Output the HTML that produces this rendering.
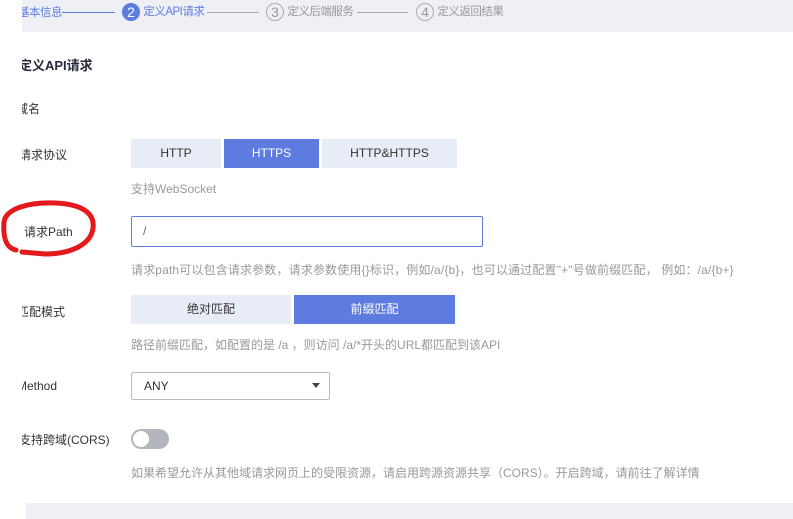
<!DOCTYPE html><html><head><meta charset="utf-8"><style>
body{margin:0;width:793px;height:519px;position:relative;overflow:hidden;background:#fff;font-family:"Liberation Sans","Noto Sans CJK SC",sans-serif;font-size:12px;color:#333}
.a{position:absolute;white-space:nowrap}
.hint{color:#999}
.btn{position:absolute;height:29px;line-height:29px;text-align:center;background:#e8ecf7;color:#333}
.on{background:#5e7ce0;color:#fff}
.c{display:inline-block;width:18px;height:18px;border-radius:50%;text-align:center;line-height:18px;font-size:14px;vertical-align:middle}
.clip{position:absolute;left:22px;top:0;width:120px;height:519px;overflow:hidden}
.st{font-size:11.5px;letter-spacing:-0.5px}
</style></head><body>
<div class="a" style="left:22px;top:0;width:771px;height:32px;background:#eef0f5"></div>
<div class="clip">
<div class="a st" style="left:-4px;top:5px;color:#5e7ce0;line-height:17px">基本信息</div>
<div class="a" style="left:0;top:55px;font-size:13px;font-weight:bold;color:#252b3a;left:-3px">定义API请求</div>
<div class="a" style="left:-6px;top:100px">域名</div>
<div class="a" style="left:-3px;top:146px">请求协议</div>
<div class="a" style="left:2px;top:223px">请求Path</div>
<div class="a" style="left:-5px;top:303px">匹配模式</div>
<div class="a" style="left:-5px;top:379px">Method</div>
<div class="a" style="left:-3px;top:431px">支持跨域(CORS)</div>
</div>
<div class="a" style="left:62px;top:12px;width:53px;height:1px;background:#5e7ce0"></div>
<div class="a" style="left:122px;top:3px;"><span class="c" style="background:#5e7ce0;color:#fff">2</span> <span class="st" style="color:#5e7ce0">定义API请求</span></div>
<div class="a" style="left:207px;top:12px;width:52px;height:1px;background:#aaa"></div>
<div class="a" style="left:266px;top:3px;color:#999"><span class="c" style="border:1px solid #aaa;width:16px;height:16px;line-height:16px">3</span> <span class="st">定义后端服务</span></div>
<div class="a" style="left:357px;top:12px;width:51px;height:1px;background:#aaa"></div>
<div class="a" style="left:416px;top:3px;color:#999"><span class="c" style="border:1px solid #aaa;width:16px;height:16px;line-height:16px">4</span> <span class="st">定义返回结果</span></div>
<div class="btn" style="left:131px;top:139px;width:90px">HTTP</div>
<div class="btn on" style="left:224px;top:139px;width:95px">HTTPS</div>
<div class="btn" style="left:322px;top:139px;width:135px">HTTP&amp;HTTPS</div>
<div class="a hint" style="left:131px;top:180px">支持WebSocket</div>
<div class="a" style="left:131px;top:216px;width:350px;height:29px;border:1px solid #5e7ce0;border-radius:2px"></div>
<div class="a" style="left:143px;top:224px;color:#666">/</div>
<div class="a hint" style="left:131px;top:261px;letter-spacing:0.15px">请求path可以包含请求参数，请求参数使用{}标识，例如/a/{b}，也可以通过配置"+"号做前缀匹配， 例如：/a/{b+}</div>
<div class="btn" style="left:131px;top:295px;width:160px">绝对匹配</div>
<div class="btn on" style="left:294px;top:295px;width:161px">前缀匹配</div>
<div class="a hint" style="left:131px;top:336px">路径前缀匹配，如配置的是 /a ，则访问 /a/*开头的URL都匹配到该API</div>
<div class="a" style="left:131px;top:372px;width:197px;height:26px;border:1px solid #bbb;border-radius:2px"></div>
<div class="a" style="left:144px;top:379px">ANY</div>
<div class="a" style="left:312px;top:383px;width:0;height:0;border-left:4px solid transparent;border-right:4px solid transparent;border-top:5px solid #444"></div>
<div class="a" style="left:131px;top:429px;width:38px;height:20px;border-radius:10px;background:#b4b6bd"></div>
<div class="a" style="left:133px;top:431px;width:16px;height:16px;border-radius:50%;background:#fff"></div>
<div class="a hint" style="left:131px;top:464px">如果希望允许从其他域请求网页上的受限资源，请启用跨源资源共享（CORS）。开启跨域，请前往了解详情</div>
<div class="a" style="left:26px;top:503px;width:767px;height:16px;background:#eef0f5"></div>
<svg class="a" style="left:0;top:0" width="120" height="270"><path d="M16 250 C5 248 3 235 4 222 C6 208 30 202 55 203 C80 204 95 212 93 228 C91 245 70 254 45 254 L22 252" fill="none" stroke="#e3191c" stroke-width="5" stroke-linecap="round"/></svg>
</body></html>
